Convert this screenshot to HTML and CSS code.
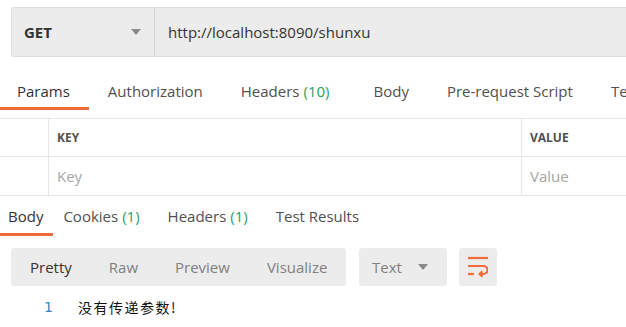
FILE: index.html
```html
<!DOCTYPE html>
<html lang="zh">
<head>
<meta charset="utf-8">
<link rel="stylesheet" href="styles.css">
</head>
<body>
<div class="page">
  <div class="request-bar">
    <div class="method">
      <span class="method-name">GET</span>
      <span class="caret"></span>
    </div>
    <div class="url">http://localhost:8090/shunxu</div>
  </div>

  <div class="req-tabs">
    <div class="tab active">Params</div>
    <div class="tab">Authorization</div>
    <div class="tab">Headers <span class="count">(10)</span></div>
    <div class="tab">Body</div>
    <div class="tab">Pre-request Script</div>
    <div class="tab">Tests</div>
  </div>

  <div class="params">
    <div class="cell first"></div>
    <div class="cell head">KEY</div>
    <div class="cell head">VALUE</div>
    <div class="cell first"></div>
    <div class="cell ph">Key</div>
    <div class="cell ph">Value</div>
  </div>

  <div class="res-tabs">
    <div class="rtab active">Body</div>
    <div class="rtab">Cookies <span class="count">(1)</span></div>
    <div class="rtab">Headers <span class="count">(1)</span></div>
    <div class="rtab">Test Results</div>
  </div>

  <div class="toolbar">
    <div class="modes">
      <div class="mode active">Pretty</div>
      <div class="mode">Raw</div>
      <div class="mode">Preview</div>
      <div class="mode">Visualize</div>
    </div>
    <div class="format">
      <span>Text</span>
      <span class="caret"></span>
    </div>
    <div class="wrap">
      <svg width="20" height="22" viewBox="0 0 20 22" fill="none" stroke="#f26b3a" stroke-width="2.2">
        <path d="M0 2H20"/>
        <path d="M0 10H15.5a4 4 0 0 1 0 8H12"/>
        <path d="M14.5 15.2L11.6 18L14.5 20.8"/>
        <path d="M0 18H6"/>
      </svg>
    </div>
  </div>

  <div class="code">
    <span class="ln">1</span>
    <span class="line">没有传递参数!</span>
  </div>
</div>
</body>
</html>
```

FILE: styles.css
```css
html, body {
  margin: 0;
  padding: 0;
  background: #ffffff;
}
body {
  width: 626px;
  height: 327px;
  overflow: hidden;
  font-family: "Open Sans", "Noto Sans", sans-serif;
  font-size: 15px;
  color: #505050;
}
.page {
  display: flex;
  flex-direction: column;
  width: 626px;
}
.request-bar {
  margin: 7px 0 0 11px;
  height: 50px;
  box-sizing: border-box;
  display: flex;
  background: #ececec;
  border: 1px solid #dedede;
  border-right: none;
  border-radius: 3px 0 0 3px;
}
.method {
  width: 143px;
  box-sizing: border-box;
  border-right: 1px solid #d6d6d6;
  display: flex;
  align-items: center;
  justify-content: space-between;
  padding: 0 13px 0 12px;
}
.method-name {
  font-weight: 700;
  color: #333333;
}
.caret {
  width: 0;
  height: 0;
  border-left: 5px solid transparent;
  border-right: 5px solid transparent;
  border-top: 6px solid #8a8a8a;
}
.url {
  display: flex;
  align-items: center;
  padding-left: 13px;
  color: #333333;
  white-space: nowrap;
}
.req-tabs {
  display: flex;
  margin-top: 17px;
  margin-left: -2px;
  white-space: nowrap;
  overflow: hidden;
}
.tab {
  height: 36px;
  box-sizing: border-box;
  display: flex;
  align-items: center;
  padding: 0 19px;
  border-bottom: 3px solid transparent;
  flex-shrink: 0;
}
.tab.active {
  color: #333333;
  border-bottom-color: #f26b3a;
}
.count {
  color: #2ba162;
  margin-left: 4px;
  margin-right: 6px;
}
.rtab .count {
  margin-right: 8px;
}
.params {
  margin-top: 8px;
  display: grid;
  grid-template-columns: 48px 1fr 105px;
  border-top: 1px solid #e6e6e6;
}
.cell {
  box-sizing: border-box;
  border-bottom: 1px solid #e6e6e6;
  display: flex;
  align-items: center;
  padding-left: 8px;
  white-space: nowrap;
}
.cell:not(.first) {
  border-left: 1px solid #e6e6e6;
}
.cell.head {
  height: 38px;
  font-size: 12px;
  font-weight: 700;
  color: #505050;
}
.cell.ph {
  height: 39px;
  color: #a6a6a6;
}
.cell.first:first-child {
  height: 38px;
}
.res-tabs {
  display: flex;
  margin-left: -2px;
  white-space: nowrap;
}
.rtab {
  height: 40px;
  box-sizing: border-box;
  padding: 3px 10px 0 10px;
  display: flex;
  align-items: center;
  border-bottom: 3px solid transparent;
}
.rtab.active {
  color: #333333;
  border-bottom-color: #f26b3a;
}
.toolbar {
  margin: 12px 0 0 11px;
  display: flex;
  gap: 12px;
}
.modes {
  display: flex;
  height: 38px;
  width: 335px;
  box-sizing: border-box;
  background: #ececec;
  border-radius: 3px;
  padding-left: 0.5px;
}
.mode {
  display: flex;
  align-items: center;
  padding: 0 18.5px;
  color: #808080;
}
.mode.active {
  color: #333333;
}
.format {
  width: 88px;
  height: 38px;
  box-sizing: border-box;
  background: #ececec;
  border-radius: 3px;
  margin-left: 1px;
  display: flex;
  align-items: center;
  justify-content: space-between;
  padding: 0 19px 0 13px;
  color: #808080;
}
.wrap {
  width: 38px;
  height: 38px;
  background: #ececec;
  border-radius: 3px;
  display: flex;
  align-items: center;
  justify-content: center;
}
.code {
  display: flex;
  align-items: center;
  margin-top: 12px;
  height: 17px;
}
.ln {
  width: 78px;
  padding: 0 26px 0 44px;
  box-sizing: border-box;
  font-size: 14px;
  color: #2a8fb8;
  font-family: "DejaVu Sans", sans-serif;
}
.line {
  font-family: "Noto Sans CJK SC", sans-serif;
  font-size: 14px;
  letter-spacing: 1.5px;
  color: #111111;
}
```
